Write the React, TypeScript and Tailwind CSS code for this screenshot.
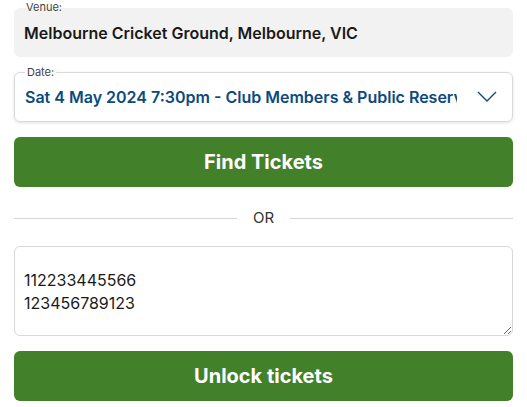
import React from 'react';

const green = 'bg-[#42812a]';

export default function App() {
  return (
    <div className="w-[527px] h-[407px] bg-white px-[14px] pt-[1px] font-['Inter','Noto_Sans',sans-serif] overflow-hidden">
      {/* Venue (read only) */}
      <fieldset className="bg-[#f2f2f2] rounded-md border-0 px-[10px] pb-[12px] m-0">
        <legend className="px-[2px] text-[11px] leading-[13px] text-[#444]">Venue:</legend>
        <div className="pt-[7px] text-[16px] leading-6 font-semibold text-[#1a1a1a]">
          Melbourne Cricket Ground, Melbourne, VIC
        </div>
      </fieldset>

      {/* Date select */}
      <fieldset className="mt-[9px] rounded-md border border-[#d9d9d9] shadow-[0_1px_3px_rgba(0,0,0,0.12)] pl-[10px] pr-[10px] pb-[12px] m-0">
        <legend className="px-[2px] text-[11px] leading-[13px] text-[#444]">Date:</legend>
        <div className="pt-[6px] flex items-center">
          <div className="w-[432px] shrink-0 overflow-hidden whitespace-nowrap text-[16px] leading-6 font-semibold text-[#0d4a7c]">
            Sat 4 May 2024 7:30pm - Club Members &amp; Public Reserve
          </div>
          <svg width="20" height="12" viewBox="0 0 20 12" className="shrink-0 ml-[20px]">
            <path d="M1 1 L10 10 L19 1" fill="none" stroke="#0d4a7c" strokeWidth="1.4" />
          </svg>
        </div>
      </fieldset>

      <button className={`mt-[15px] w-full h-[50px] rounded-md ${green} text-white text-[20px] font-bold`}>
        Find Tickets
      </button>

      {/* OR divider */}
      <div className="mt-[21px] flex items-center gap-4">
        <div className="flex-1 h-px bg-[#d6d6d6]" />
        <span className="text-[15px] leading-5 text-[#333]">OR</span>
        <div className="flex-1 h-px bg-[#d6d6d6]" />
      </div>

      <textarea
        className="mt-[18px] block w-full h-[90px] rounded-md border border-[#d9d9d9] pt-[22px] px-[9px] text-[16px] leading-[23px] text-[#1a1a1a] outline-none"
        defaultValue={'112233445566\n123456789123'}
      />

      <button className={`mt-[15px] w-full h-[50px] rounded-md ${green} text-white text-[20px] font-bold`}>
        Unlock tickets
      </button>
    </div>
  );
}
